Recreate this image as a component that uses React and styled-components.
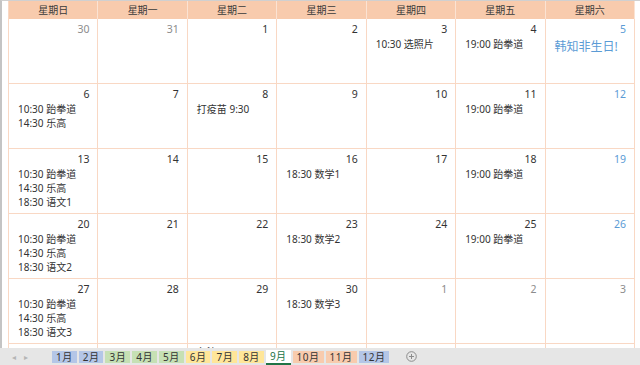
import React from 'react';
import styled, { createGlobalStyle } from 'styled-components';

const COLORS = {
  header: '#f8cbad',
  grid: '#f9d8c4',
  text: '#333333',
  muted: '#8c8c8c',
  saturday: '#5b9bd5',
  tabBar: '#e6e6e6',
};

const GlobalStyle = createGlobalStyle`
  html, body {
    margin: 0;
    padding: 0;
    overflow: hidden;
    background: #ffffff;
    font-family: "Noto Sans", "Noto Sans CJK SC", sans-serif;
    color: ${COLORS.text};
  }
`;

const WEEKDAYS = ['星期日', '星期一', '星期二', '星期三', '星期四', '星期五', '星期六'];

const WEEKS = [
  [
    { n: 30, muted: true },
    { n: 31, muted: true },
    { n: 1 },
    { n: 2 },
    { n: 3, ev: ['10:30 选照片'] },
    { n: 4, ev: ['19:00 跆拳道'] },
    { n: 5, note: '韩知非生日!' },
  ],
  [
    { n: 6, ev: ['10:30 跆拳道', '14:30 乐高'] },
    { n: 7 },
    { n: 8, ev: ['打疫苗 9:30'] },
    { n: 9 },
    { n: 10 },
    { n: 11, ev: ['19:00 跆拳道'] },
    { n: 12 },
  ],
  [
    { n: 13, ev: ['10:30 跆拳道', '14:30 乐高', '18:30 语文1'] },
    { n: 14 },
    { n: 15 },
    { n: 16, ev: ['18:30 数学1'] },
    { n: 17 },
    { n: 18, ev: ['19:00 跆拳道'] },
    { n: 19 },
  ],
  [
    { n: 20, ev: ['10:30 跆拳道', '14:30 乐高', '18:30 语文2'] },
    { n: 21 },
    { n: 22 },
    { n: 23, ev: ['18:30 数学2'] },
    { n: 24 },
    { n: 25, ev: ['19:00 跆拳道'] },
    { n: 26 },
  ],
  [
    { n: 27, ev: ['10:30 跆拳道', '14:30 乐高', '18:30 语文3'] },
    { n: 28 },
    { n: 29 },
    { n: 30, ev: ['18:30 数学3'] },
    { n: 1, muted: true },
    { n: 2, muted: true },
    { n: 3, muted: true },
  ],
];

const TABS = [
  { label: '1月', color: '#b4c6e7' },
  { label: '2月', color: '#b4c6e7' },
  { label: '3月', color: '#c6e0b4' },
  { label: '4月', color: '#c6e0b4' },
  { label: '5月', color: '#c6e0b4' },
  { label: '6月', color: '#ffe699' },
  { label: '7月', color: '#ffe699' },
  { label: '8月', color: '#ffe699' },
  { label: '9月', color: '#ffffff', active: true },
  { label: '10月', color: '#f8cbad' },
  { label: '11月', color: '#f8cbad' },
  { label: '12月', color: '#b4c6e7' },
];

const App = () => {
  return (
    <Page>
      <GlobalStyle />
      <Sheet>
        <Calendar>
          {WEEKDAYS.map((d) => (
            <HeaderCell key={d}>{d}</HeaderCell>
          ))}
          {WEEKS.map((week, wi) =>
            week.map((day, di) => (
              <DayCell key={`${wi}-${di}`}>
                <DayNum $muted={day.muted} $saturday={di === 6}>{day.n}</DayNum>
                {day.ev && day.ev.map((e) => <Event key={e}>{e}</Event>)}
                {day.note && <Note>{day.note}</Note>}
              </DayCell>
            ))
          )}
          <DayCell><DayNum $muted>4</DayNum></DayCell>
          <DayCell><DayNum $muted>5</DayNum></DayCell>
          <DayCell><Remark>备注</Remark></DayCell>
          <DayCell />
          <DayCell />
          <DayCell />
          <DayCell />
        </Calendar>
      </Sheet>
      <TabBar>
        <NavArrows>
          <Arrow>◂</Arrow>
          <Arrow>▸</Arrow>
        </NavArrows>
        <Tabs>
          {TABS.map((t) => (
            <Tab key={t.label} $bg={t.color} $active={t.active}>{t.label}</Tab>
          ))}
        </Tabs>
        <AddSheet>
          <svg width="11" height="11" viewBox="0 0 11 11">
            <circle cx="5.5" cy="5.5" r="4.8" fill="none" stroke="#8c8c8c" strokeWidth="1" />
            <path d="M5.5 3v5M3 5.5h5" stroke="#8c8c8c" strokeWidth="1" />
          </svg>
        </AddSheet>
      </TabBar>
    </Page>
  );
};

const Page = styled.div`
  width: 640px;
  height: 365px;
  display: flex;
  flex-direction: column;
  overflow: hidden;
`;

const Sheet = styled.div`
  height: 348px;
  flex-shrink: 0;
  overflow: hidden;
  border-left: 2px solid #c4c4c4;
  border-top: 1px solid #d0d0d0;
  padding-left: 6px;
  box-sizing: border-box;
`;

const Calendar = styled.div`
  width: 626px;
  display: grid;
  grid-template-columns: repeat(7, 1fr);
  grid-template-rows: 18px repeat(6, 65px);
  border-left: 1px solid ${COLORS.grid};
`;

const HeaderCell = styled.div`
  background: ${COLORS.header};
  border-right: 1px solid #fbe3d3;
  font-size: 10px;
  line-height: 18px;
  text-align: center;
  color: #3a3a3a;
`;

const DayCell = styled.div`
  border-right: 1px solid ${COLORS.grid};
  border-bottom: 1px solid ${COLORS.grid};
  padding: 2px 8px 0 9px;
  overflow: hidden;
  box-sizing: border-box;
`;

const DayNum = styled.div`
  text-align: right;
  font-size: 10.5px;
  line-height: 16px;
  color: ${({ $muted, $saturday }) => ($muted ? COLORS.muted : $saturday ? COLORS.saturday : COLORS.text)};
`;

const Event = styled.div`
  font-size: 10px;
  line-height: 14px;
  white-space: nowrap;
  &:first-of-type {
    margin-top: 4px;
  }
`;

const Note = styled.div`
  margin-top: 2px;
  font-size: 12px;
  line-height: 16px;
  color: ${COLORS.saturday};
`;

const Remark = styled.div`
  margin-top: -1px;
  font-size: 10px;
  line-height: 14px;
`;

const TabBar = styled.div`
  flex: 1;
  display: flex;
  align-items: stretch;
  background: ${COLORS.tabBar};
`;

const NavArrows = styled.div`
  width: 52px;
  display: flex;
  align-items: center;
  gap: 8px;
  padding-left: 12px;
  box-sizing: border-box;
`;

const Arrow = styled.span`
  font-size: 8px;
  color: #b5b5b5;
`;

const Tabs = styled.div`
  display: flex;
  align-items: flex-start;
  gap: 2px;
  padding-top: 3px;
`;

const Tab = styled.div`
  background: ${({ $bg }) => $bg};
  padding: 0 4px;
  height: ${({ $active }) => ($active ? '13px' : '12px')};
  margin-top: ${({ $active }) => ($active ? '-1px' : '0')};
  font-size: 10px;
  line-height: 12px;
  letter-spacing: 0.5px;
  color: ${({ $active }) => ($active ? '#217346' : '#333')};
  border-bottom: ${({ $active }) => ($active ? '2px solid #217346' : 'none')};
  box-sizing: content-box;
`;

const AddSheet = styled.div`
  margin-left: 17px;
  display: flex;
  align-items: center;
`;

export default App;
